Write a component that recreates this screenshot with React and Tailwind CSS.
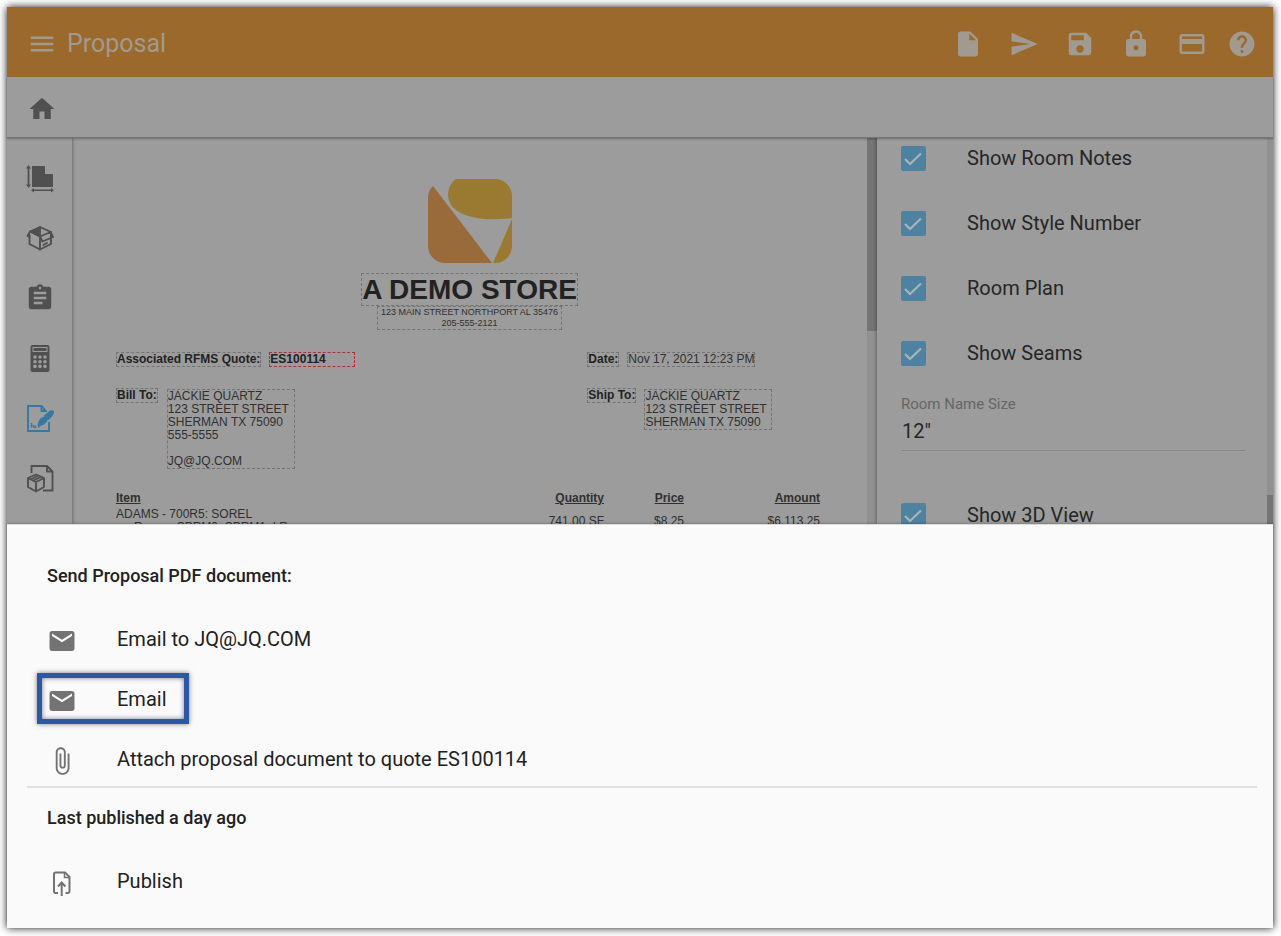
import React, { useState } from 'react';
import {
  MdMenu,
  MdInsertDriveFile,
  MdSend,
  MdSave,
  MdLock,
  MdCreditCard,
  MdHelp,
  MdHome,
  MdAssignment,
  MdEmail,
  MdAttachFile,
} from 'react-icons/md';

const headerActions = [
  { label: 'New document', Icon: MdInsertDriveFile },
  { label: 'Send', Icon: MdSend },
  { label: 'Save', Icon: MdSave },
  { label: 'Lock', Icon: MdLock },
  { label: 'Payment', Icon: MdCreditCard },
];

const lineItems = [
  { item: 'ADAMS - 700R5: SOREL', detail: 'Room - SPRM0: SPRM1, LR', quantity: '741.00 SF', price: '$8.25', amount: '$6,113.25' },
];

function RoomShapeIcon() {
  return (
    <svg width="30" height="30" viewBox="0 0 30 30" fill="currentColor">
      <path d="M7 3h13v8h8v13H7z" />
      <path d="M3.500 2l2.500 3.500H4.400v16H6L3.500 25 1 21.500h1.600v-16H1zM6 27.200l3-2.200v1.400h17V25l3 2.200-3 2.200V28H9v1.400z" />
    </svg>
  );
}

function OpenBoxIcon() {
  return (
    <svg width="30" height="30" viewBox="0 0 30 30" fill="none" stroke="currentColor" strokeWidth="1.900" strokeLinejoin="round" strokeLinecap="round">
      <path d="M15 4l11 5v12L15 26.500 4.500 21V12" />
      <path d="M5 8.500L15 4v9.500z" fill="currentColor" />
      <path d="M5 8.500L2.500 13l2 1M5 8.500l10 5v13M15 13.500L25.500 9l2.500 5-10.500 4.500L15 13.500M18.500 22l3.500-2" />
    </svg>
  );
}

function CalculatorIcon() {
  return (
    <svg width="30" height="30" viewBox="0 0 30 30">
      <rect x="5.500" y="2" width="19" height="27" rx="2" fill="currentColor" />
      <rect x="8" y="4.500" width="14" height="4" fill="none" stroke="#9c9c9c" strokeWidth="1" />
      {[14, 18.7, 23.4].map((y) =>
        [10, 15, 20].map((x) => <circle key={`${x}-${y}`} cx={x} cy={y} r="1.8" fill="#9c9c9c" />)
      )}
    </svg>
  );
}

function SignDocumentIcon() {
  return (
    <svg width="30" height="30" viewBox="0 0 30 30" fill="none" stroke="currentColor" strokeWidth="1.900">
      <path d="M21 9V8l-4.500-5H3v25h21v-9" />
      <path d="M16.500 3v5H21" />
      <path d="M6.500 20v4.500M8.500 22v2.500M10.300 22.500v2h1M13 24h1.500" strokeWidth="1.500" />
      <path d="M12.500 23.500c0-4 2-8 5.500-9.500 3 0 4.500 2 4 4.500C19.500 21.500 17 23 12.500 23.500z" fill="currentColor" stroke="none" />
      <path d="M18.500 13l6-5c2-1.500 5-.5 4.500 1.500-.5 2.500-3 5.500-6 8z" fill="currentColor" stroke="none" />
    </svg>
  );
}

function ProductDocumentIcon() {
  return (
    <svg width="30" height="30" viewBox="0 0 30 30" fill="none" stroke="currentColor" strokeWidth="1.900" strokeLinejoin="round">
      <path d="M6.500 10V3H22l5.500 5.500v19H18" />
      <path d="M22 3v5.500h5.500" />
      <path d="M3 15l8-3.500 8 3.500v9l-8 4.500L3 24zM3 15l8 4 8-4M11 19v9.500M5.500 16.500l8-4M8.500 17.500l8-4" />
    </svg>
  );
}

function PublishIcon() {
  return (
    <svg width="30" height="30" viewBox="0 0 30 30" fill="none" stroke="currentColor" strokeWidth="2">
      <path d="M11 25H8.500A1.500 1.500 0 0 1 7 23.500V6a1.500 1.500 0 0 1 1.500-1.500h9.500l4.500 4.500v14.500A1.500 1.500 0 0 1 21 25h-2.500" />
      <path d="M17.500 4.500v5h5" strokeWidth="1.500" />
      <path d="M14.700 28V15M11 18.500l3.700-4 3.700 4" />
    </svg>
  );
}

function StoreLogo() {
  return (
    <svg className="shrink-0" width="84" height="84" viewBox="0 0 84 84" role="img" aria-label="A Demo Store">
      <path d="M5 7L64 84H17A17 17 0 0 1 0 67V19Q0 12 5 7z" fill="#996b3b" />
      <path d="M28 0H67A17 17 0 0 1 84 17V39C62 42 40 40 28 31C18 24 17 8 28 0z" fill="#9a7a30" />
      <path d="M84 40V67A17 17 0 0 1 67 84H65z" fill="#9a7a30" />
    </svg>
  );
}

const tools = [
  { label: 'Room plan', Icon: RoomShapeIcon },
  { label: 'Products', Icon: OpenBoxIcon },
  { label: 'Worksheet', Icon: MdAssignment },
  { label: 'Estimate', Icon: CalculatorIcon },
  { label: 'Proposal', Icon: SignDocumentIcon, active: true },
  { label: 'Order', Icon: ProductDocumentIcon },
];

function Field({ children, className = '' }) {
  return <div className={`border border-dashed border-[#747474] ${className}`}>{children}</div>;
}

function Option({ label, defaultChecked = true }) {
  const [checked, setChecked] = useState(defaultChecked);

  return (
    <label className="flex items-center gap-[41px] text-xl leading-[25px] text-[#262626]">
      <span className="grid size-[25px] shrink-0">
        <input
          type="checkbox"
          checked={checked}
          onChange={(e) => setChecked(e.target.checked)}
          className="col-start-1 row-start-1 size-[25px] appearance-none rounded-xs bg-[#4d82a1]"
        />
        {checked && (
          <svg className="pointer-events-none col-start-1 row-start-1" width="25" height="25" viewBox="0 0 25 25" fill="none" stroke="#a9b3b8" strokeWidth="2.200">
            <path d="M4 13l5 5L20 7.500" />
          </svg>
        )}
      </span>
      {label}
    </label>
  );
}

function SheetAction({ Icon, label, highlighted }) {
  return (
    <button
      className={`flex h-[51px] items-center gap-10 self-start border-5 pr-[17px] pl-[5px] text-xl text-[#212121] ${
        highlighted
          ? 'border-[#2c56a8] shadow-[0_0_5px_rgba(0,0,0,0.5),inset_0_0_5px_rgba(0,0,0,0.5)]'
          : 'border-transparent'
      }`}
    >
      <span className="pt-1 text-[#737373]">
        <Icon size={30} />
      </span>
      {label}
    </button>
  );
}

function ProposalDocument() {
  return (
    <div className="flex min-w-0 flex-1 flex-col items-center overflow-hidden px-11 pt-[41px] font-['Liberation_Sans',Arial,sans-serif] text-xs leading-[13px] text-[#303030]">
      <StoreLogo />
      <Field className="mt-[10px] text-[28px] leading-[31px] font-bold text-[#222222]">A DEMO STORE</Field>
      <Field className="px-[3px] text-center text-[9px] leading-[11px]">
        123 MAIN STREET NORTHPORT AL 35476
        <br />
        205-555-2121
      </Field>

      <div className="mt-[22px] grid w-full grid-cols-[2fr_1fr] items-start">
        <div className="flex gap-2">
          <Field className="font-bold text-[#222222]">Associated RFMS Quote:</Field>
          <div className="w-[86px] border border-dashed border-[#b03030] font-bold text-[#222222]">ES100114</div>
        </div>
        <div className="flex gap-2">
          <Field className="font-bold text-[#222222]">Date:</Field>
          <Field>Nov 17, 2021 12:23 PM</Field>
        </div>
      </div>

      <div className="mt-[21px] grid w-full grid-cols-[2fr_1fr] items-start">
        <div className="flex items-start gap-[9px]">
          <Field className="font-bold text-[#222222]">Bill To:</Field>
          <Field className="mt-px w-32 whitespace-pre-line">
            {'JACKIE QUARTZ\n123 STREET STREET\nSHERMAN TX 75090\n555-5555\n\nJQ@JQ.COM'}
          </Field>
        </div>
        <div className="flex items-start gap-2">
          <Field className="font-bold text-[#222222]">Ship To:</Field>
          <Field className="mt-px w-32 whitespace-pre-line">
            {'JACKIE QUARTZ\n123 STREET STREET\nSHERMAN TX 75090'}
          </Field>
        </div>
      </div>

      <table className="mt-[23px] w-full table-fixed">
        <thead>
          <tr className="underline">
            <th className="text-left">Item</th>
            <th className="w-[100px] text-right">Quantity</th>
            <th className="w-20 text-right">Price</th>
            <th className="w-[139px] pr-[3px] text-right">Amount</th>
          </tr>
        </thead>
        <tbody>
          {lineItems.map((line) => (
            <tr key={line.item}>
              <td className="pt-[3px]">
                {line.item}
                <div className="pl-[18px]">{line.detail}</div>
              </td>
              <td className="pt-1 text-right">{line.quantity}</td>
              <td className="pt-1 text-right">{line.price}</td>
              <td className="pt-1 pr-[3px] text-right">{line.amount}</td>
            </tr>
          ))}
        </tbody>
      </table>
    </div>
  );
}

export default function App() {
  const [roomNameSize, setRoomNameSize] = useState('12"');

  return (
    <div className="h-screen bg-white pt-[7px] pr-2 pb-2 pl-[7px] font-[Roboto,sans-serif]">
      <div className="flex h-full flex-col bg-[#9c9c9c] shadow-[0_0_8px_rgba(0,0,0,0.9)]">
        <header className="flex h-[70px] shrink-0 items-center bg-[#9b692c] pt-[3px] pr-[9px] pl-5 text-[#a09a90]">
          <button aria-label="Menu">
            <MdMenu size={30} />
          </button>
          <h1 className="ml-[10px] flex-1 text-[25px] leading-8">Proposal</h1>
          {headerActions.map(({ label, Icon }) => (
            <button key={label} aria-label={label} className="flex w-14 justify-center">
              <Icon size={30} />
            </button>
          ))}
          <button aria-label="Help" className="flex w-11 justify-center">
            <MdHelp size={30} />
          </button>
        </header>

        <nav className="z-10 flex h-[61px] shrink-0 items-center border-b border-[#747474] pt-[3px] pl-5 text-[#505050] shadow-[0_1px_2px_rgba(0,0,0,0.3)]">
          <a href="#home" aria-label="Home">
            <MdHome size={30} />
          </a>
        </nav>

        <main className="flex min-h-0 flex-1 overflow-hidden">
          <aside className="flex w-[65px] shrink-0 flex-col pt-[10px] shadow-[1px_0_3px_rgba(0,0,0,0.3)]">
            {tools.map(({ label, Icon, active }) => (
              <button
                key={label}
                aria-label={label}
                className={`flex h-[60px] shrink-0 items-center justify-center ${active ? 'text-[#3579a3]' : 'text-[#505050]'}`}
              >
                <Icon size={30} />
              </button>
            ))}
          </aside>

          <ProposalDocument />
          <div className="w-[10px] shrink-0 bg-[#919191]">
            <div className="h-1/2 bg-[#757575]" />
          </div>

          <section className="flex w-[396px] shrink-0 shadow-[-1px_0_3px_rgba(0,0,0,0.3)]">
            <div className="flex flex-1 flex-col gap-10 overflow-hidden pt-2 pr-[22px] pl-6">
              <Option label="Show Room Notes" />
              <Option label="Show Style Number" />
              <Option label="Room Plan" />
              <Option label="Show Seams" />
              <div className="-mt-3 mb-3 flex flex-col">
                <label htmlFor="room-name-size" className="text-[15px] leading-5 text-[#666666]">
                  Room Name Size
                </label>
                <input
                  id="room-name-size"
                  value={roomNameSize}
                  onChange={(e) => setRoomNameSize(e.target.value)}
                  className="h-[37px] border-b border-[#868686] px-px pb-[2px] text-xl text-[#262626] outline-none"
                />
              </div>
              <Option label="Show 3D View" />
            </div>
            <div className="flex w-[6px] flex-col justify-end bg-[#919191]">
              <div className="h-[29px] bg-[#757575]" />
            </div>
          </section>
        </main>

        <section className="z-10 flex shrink-0 flex-col border-t border-[#dcdcdc] bg-[#fafafa] pt-[39px] pr-4 pb-[22px] pl-5 shadow-[0_-1px_2px_rgba(0,0,0,0.2)]">
          <h2 className="pl-5 text-lg leading-6 font-medium text-[#212121]">Send Proposal PDF document:</h2>
          <div className="mt-[25px] flex flex-col gap-[9px] pl-[10px]">
            <SheetAction Icon={MdEmail} label="Email to JQ@JQ.COM" />
            <SheetAction Icon={MdEmail} label="Email" highlighted />
            <SheetAction Icon={MdAttachFile} label="Attach proposal document to quote ES100114" />
          </div>
          <hr className="mt-[2px] border-t-2 border-[#e0e0e0]" />
          <h2 className="mt-[18px] pl-5 text-lg leading-6 font-medium text-[#212121]">Last published a day ago</h2>
          <div className="mt-[25px] flex flex-col pl-[10px]">
            <SheetAction Icon={PublishIcon} label="Publish" />
          </div>
        </section>
      </div>
    </div>
  );
}
